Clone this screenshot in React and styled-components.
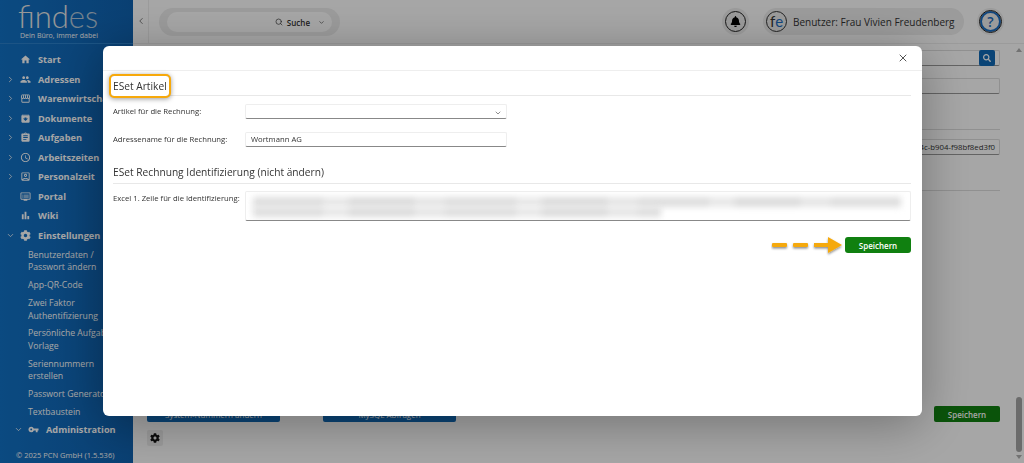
import React from "react";
import styled, { createGlobalStyle } from "styled-components";
import { FaBell, FaCog, FaSearch } from "react-icons/fa";
import {
  MdHome,
  MdPeople,
  MdOutlineStorefront,
  MdArchive,
  MdAssignment,
  MdAccessTime,
  MdOutlineAccountBox,
  MdOutlineDvr,
  MdBarChart,
  MdVpnKey,
} from "react-icons/md";
import { FiChevronRight, FiChevronDown, FiChevronLeft, FiX, FiSearch } from "react-icons/fi";

const GlobalStyle = createGlobalStyle`
  html, body { margin: 0; height: 100%; overflow: hidden; }
  body { font-family: "Open Sans", "Liberation Sans", sans-serif; background: #fff; color: #333; }
  * { box-sizing: border-box; }
`;

const menu = [
  { label: "Start", icon: MdHome },
  { label: "Adressen", icon: MdPeople, arrow: true },
  { label: "Warenwirtschaft", icon: MdOutlineStorefront, arrow: true },
  { label: "Dokumente", icon: MdArchive, arrow: true },
  { label: "Aufgaben", icon: MdAssignment, arrow: true },
  { label: "Arbeitszeiten", icon: MdAccessTime, arrow: true },
  { label: "Personalzeit", icon: MdOutlineAccountBox, arrow: true },
  { label: "Portal", icon: MdOutlineDvr },
  { label: "Wiki", icon: MdBarChart },
  { label: "Einstellungen", icon: FaCog, open: true },
];

const subMenu = [
  "Benutzerdaten /\nPasswort ändern",
  "App-QR-Code",
  "Zwei Faktor\nAuthentifizierung",
  "Persönliche Aufgaben\nVorlage",
  "Seriennummern\nerstellen",
  "Passwort Generator",
  "Textbaustein",
];

const blurLines = [648, 408];

const App = () => {
  return (
    <>
      <GlobalStyle />
      <Page>
        <Sidebar>
          <Logo>
            <LogoWord>
              find<em>es</em>
            </LogoWord>
            <LogoSlogan>Dein Büro, immer dabei</LogoSlogan>
          </Logo>
          <Menu>
            {menu.map((item) => (
              <MenuItem key={item.label}>
                <Caret>
                  {item.arrow && <FiChevronRight />}
                  {item.open && <FiChevronDown />}
                </Caret>
                <MenuIcon>
                  <item.icon />
                </MenuIcon>
                <span>{item.label}</span>
              </MenuItem>
            ))}
            <SubMenu>
              {subMenu.map((label) => (
                <SubItem key={label}>{label}</SubItem>
              ))}
            </SubMenu>
            <AdminItem>
              <Caret>
                <FiChevronDown />
              </Caret>
              <MenuIcon>
                <MdVpnKey />
              </MenuIcon>
              <span>Administration</span>
            </AdminItem>
          </Menu>
          <Copyright>© 2025 PCN GmbH (1.5.536)</Copyright>
        </Sidebar>

        <Main>
          <Header>
            <CollapseTab>
              <FiChevronLeft />
            </CollapseTab>
            <SearchPill>
              <SearchInner>
                <FiSearch />
                <span>Suche</span>
                <FiChevronDown />
              </SearchInner>
            </SearchPill>
            <HeaderRight>
              <RoundHalo>
                <BellCircle>
                  <FaBell />
                </BellCircle>
              </RoundHalo>
              <UserPill>
                <UserLogo>
                  f<b>e</b>
                </UserLogo>
                <span>Benutzer: Frau Vivien Freudenberg</span>
              </UserPill>
              <RoundHalo>
                <HelpCircle>?</HelpCircle>
              </RoundHalo>
            </HeaderRight>
          </Header>

          <ContentWrap>
            <Content>
              <Field $top={6}>
                <SearchButton>
                  <FaSearch />
                </SearchButton>
              </Field>
              <Field $top={12} />
              <Rule $top={35} />
              <Field $top={9}>
                <FieldText>4c-b904-f98bf8ed3f0</FieldText>
              </Field>
              <Rule $top={35} />
              <BottomRow>
                <BlueButton>System-Nummern ändern</BlueButton>
                <BlueButton>MySQL Abfragen</BlueButton>
                <SaveBehind>Speichern</SaveBehind>
              </BottomRow>
              <GearButton>
                <FaCog />
              </GearButton>
            </Content>
            <ScrollBar>
              <ScrollArrow />
              <ScrollThumb />
              <ScrollArrow $down />
            </ScrollBar>
          </ContentWrap>
        </Main>
      </Page>

      <Overlay>
        <Modal>
          <ModalHeader>
            <FiX />
          </ModalHeader>
          <ModalBody>
            <SectionTitle>
              <Highlighted>ESet Artikel</Highlighted>
            </SectionTitle>
            <FormRow>
              <FormLabel>Artikel für die Rechnung:</FormLabel>
              <FormInput>
                <SelectCaret>
                  <FiChevronDown />
                </SelectCaret>
              </FormInput>
            </FormRow>
            <FormRow $top={13}>
              <FormLabel>Adressename für die Rechnung:</FormLabel>
              <FormInput>Wortmann AG</FormInput>
            </FormRow>
            <SecondTitle>ESet Rechnung Identifizierung (nicht ändern)</SecondTitle>
            <FormRow>
              <FormLabel>Excel 1. Zeile für die Identifizierung:</FormLabel>
              <TextBox>
                {blurLines.map((width) => (
                  <BlurLine key={width} style={{ width }} />
                ))}
              </TextBox>
            </FormRow>
            <ActionRow>
              <svg width="74" height="24" viewBox="0 0 74 24">
                <defs>
                  <filter id="arrowShadow" x="-10%" y="-30%" width="120%" height="180%">
                    <feDropShadow dx="0" dy="1.5" stdDeviation="1.2" floodColor="#000" floodOpacity="0.45" />
                  </filter>
                </defs>
                <g fill="#f5a90f" filter="url(#arrowShadow)">
                  <rect x="1" y="10" width="15" height="4" rx="1" />
                  <rect x="22" y="10" width="15" height="4" rx="1" />
                  <path d="M43 10h14V4l14 8-14 8v-6H43z" />
                </g>
              </svg>
              <SaveButton>Speichern</SaveButton>
            </ActionRow>
          </ModalBody>
        </Modal>
      </Overlay>
    </>
  );
};

export default App;

const Page = styled.div`
  display: flex;
  width: 1024px;
  height: 463px;
  overflow: hidden;
`;

const Sidebar = styled.aside`
  width: 133px;
  flex: none;
  display: flex;
  flex-direction: column;
  background: linear-gradient(90deg, #1272c6, #0f62b0);
  color: #fff;
`;

const Logo = styled.div`
  height: 44px;
  padding: 1px 0 0 18px;
  border-bottom: 1px solid #2c82cc;
`;

const LogoWord = styled.div`
  height: 30px;
  font-family: Lato, sans-serif;
  font-weight: 300;
  font-size: 31px;
  line-height: 31px;
  color: #e8e8e8;
  em {
    font-style: normal;
    color: #b4c8da;
  }
`;

const LogoSlogan = styled.div`
  margin-left: 2px;
  font-size: 7px;
  line-height: 9px;
  white-space: nowrap;
`;

const Menu = styled.nav`
  padding-top: 6px;
  flex: 1;
`;

const MenuItem = styled.div`
  display: flex;
  align-items: center;
  height: 19.5px;
  font-size: 9.2px;
  font-weight: 700;
  white-space: nowrap;
  overflow: hidden;
`;

const AdminItem = styled(MenuItem)`
  padding-left: 8px;
  margin-top: -0.5px;
`;

const Caret = styled.span`
  width: 20px;
  flex: none;
  display: flex;
  justify-content: center;
  font-size: 9px;
`;

const MenuIcon = styled.span`
  width: 18px;
  flex: none;
  display: flex;
  font-size: 11px;
`;

const SubMenu = styled.div`
  padding-top: 1px;
`;

const SubItem = styled.div`
  padding: 3.2px 0 2.4px 28px;
  font-size: 8.7px;
  line-height: 12.3px;
  white-space: pre;
`;

const Copyright = styled.div`
  padding: 0 0 3px 16px;
  font-size: 7.5px;
  line-height: 9px;
  white-space: nowrap;
`;

const Main = styled.main`
  flex: 1;
  min-width: 0;
  display: flex;
  flex-direction: column;
  background: #fff;
`;

const Header = styled.header`
  height: 44px;
  flex: none;
  display: flex;
  align-items: flex-start;
  border-bottom: 1px solid #eee;
`;

const CollapseTab = styled.div`
  width: 16px;
  height: 43px;
  display: flex;
  align-items: center;
  justify-content: center;
  border-right: 1px solid #eee;
  font-size: 10px;
  color: #666;
  padding-bottom: 2px;
`;

const SearchPill = styled.div`
  width: 181px;
  height: 28px;
  margin: 8px 0 0 10px;
  padding: 4px 8px;
  border-radius: 14px;
  background: #eee;
`;

const SearchInner = styled.div`
  height: 20px;
  border-radius: 10px;
  background: #fff;
  display: flex;
  align-items: center;
  justify-content: flex-end;
  gap: 4px;
  padding-right: 7px;
  font-size: 8px;
  font-weight: 600;
  color: #333;
  svg:last-child {
    margin-left: 4px;
    font-size: 7px;
  }
`;

const HeaderRight = styled.div`
  margin-left: auto;
  display: flex;
  align-items: center;
  padding: 8px 20px 0 0;
`;

const RoundHalo = styled.div`
  width: 27px;
  height: 27px;
  border-radius: 50%;
  background: #eee;
  display: flex;
  align-items: center;
  justify-content: center;
`;

const BellCircle = styled.div`
  width: 21px;
  height: 21px;
  border-radius: 50%;
  border: 1px solid #222;
  display: flex;
  align-items: center;
  justify-content: center;
  font-size: 11px;
  color: #000;
`;

const HelpCircle = styled.div`
  width: 21px;
  height: 21px;
  border-radius: 50%;
  border: 2px solid #1a6cc0;
  outline: 1px solid #222;
  display: flex;
  align-items: center;
  justify-content: center;
  font-size: 14px;
  font-weight: 600;
  color: #1a6cc0;
`;

const UserPill = styled.div`
  width: 201px;
  height: 27px;
  margin: 0 13px 0 14px;
  padding-left: 3px;
  border-radius: 14px;
  background: #eee;
  display: flex;
  align-items: center;
  gap: 6px;
  font-size: 10px;
  white-space: nowrap;
  color: #333;
`;

const UserLogo = styled.div`
  width: 21px;
  height: 21px;
  flex: none;
  border-radius: 50%;
  border: 1px solid #333;
  display: flex;
  align-items: center;
  justify-content: center;
  font-family: Lato, sans-serif;
  font-size: 15px;
  line-height: 1;
  b {
    font-weight: 400;
    color: #1a6cc0;
  }
`;

const ContentWrap = styled.div`
  flex: 1;
  min-height: 0;
  display: flex;
`;

const Content = styled.div`
  width: 867px;
  padding-left: 14px;
`;

const Field = styled.div`
  height: 16px;
  margin-top: ${(p) => p.$top}px;
  border: 1px solid #ddd;
  border-bottom-color: #999;
  border-radius: 2px;
  display: flex;
  align-items: center;
  justify-content: flex-end;
  background: #fff;
`;

const FieldText = styled.span`
  font-size: 7.8px;
  padding-right: 4px;
  color: #333;
  white-space: nowrap;
`;

const SearchButton = styled.div`
  width: 16px;
  height: 16px;
  margin-right: 4px;
  border-radius: 2px;
  background: #1069b6;
  color: #fff;
  display: flex;
  align-items: center;
  justify-content: center;
  font-size: 8px;
`;

const Rule = styled.div`
  height: 1px;
  margin-top: ${(p) => p.$top}px;
  background: #ddd;
`;

const BottomRow = styled.div`
  margin-top: 215px;
  height: 16px;
  display: flex;
  gap: 43px;
`;

const BlueButton = styled.div`
  width: 133px;
  height: 16px;
  border-radius: 2px;
  background: #1069b6;
  color: #fff;
  font-size: 8px;
  display: flex;
  align-items: center;
  justify-content: center;
`;

const SaveBehind = styled.div`
  margin-left: auto;
  width: 66px;
  height: 16px;
  border-radius: 2px;
  background: #108010;
  color: #fff;
  font-size: 8px;
  font-weight: 600;
  display: flex;
  align-items: center;
  justify-content: center;
`;

const GearButton = styled.div`
  width: 16px;
  height: 16px;
  margin-top: 8px;
  border-radius: 2px;
  background: #eee;
  color: #111;
  font-size: 10px;
  display: flex;
  align-items: center;
  justify-content: center;
`;

const ScrollBar = styled.div`
  width: 24px;
  margin-left: auto;
  padding: 4px 2px 4px 16px;
  display: flex;
  flex-direction: column;
  align-items: center;
`;

const ScrollArrow = styled.div`
  width: 0;
  height: 0;
  flex: none;
  border-left: 3px solid transparent;
  border-right: 3px solid transparent;
  ${(p) => (p.$down ? "border-top: 4px solid #b0b0b0;" : "border-bottom: 4px solid #b0b0b0;")}
`;

const ScrollThumb = styled.div`
  width: 6px;
  height: 55px;
  flex: none;
  margin-top: auto;
  margin-bottom: 3px;
  border-radius: 3px;
  background: #a5a5a5;
`;

const Overlay = styled.div`
  position: fixed;
  inset: 0;
  padding: 46px 0 0 103px;
  background: rgba(0, 0, 0, 0.35);
`;

const Modal = styled.div`
  width: 819px;
  height: 370px;
  border-radius: 6px;
  background: #fff;
  box-shadow: 0 8px 50px rgba(0, 0, 0, 0.32);
`;

const ModalHeader = styled.div`
  height: 25px;
  display: flex;
  align-items: center;
  justify-content: flex-end;
  padding: 0 13px 0 0;
  border-bottom: 1px solid #eee;
  font-size: 12px;
  color: #555;
`;

const ModalBody = styled.div`
  padding: 0 11px 0 10px;
`;

const SectionTitle = styled.div`
  height: 25px;
  border-bottom: 1px solid #e8e8e8;
  margin-bottom: 8px;
  display: flex;
  align-items: flex-start;
  font-size: 10.2px;
  color: #333;
`;

const Highlighted = styled.span`
  display: block;
  height: 20px;
  margin: 5px 0 0 -2px;
  padding: 0 2px;
  line-height: 20px;
  border-radius: 3px;
  outline: 2px solid #f7a90b;
  background: #fff;
  box-shadow: 0 1px 5px 2px rgba(0, 0, 0, 0.4);
  white-space: nowrap;
`;

const SecondTitle = styled.div`
  margin: 18px 0 7px;
  height: 19px;
  padding-bottom: 2px;
  border-bottom: 1px solid #e8e8e8;
  font-size: 10.2px;
  line-height: 15px;
  color: #333;
`;

const FormRow = styled.div`
  display: grid;
  grid-template-columns: 132px 1fr;
  margin-top: ${(p) => p.$top || 0}px;
`;

const FormLabel = styled.label`
  font-size: 7.7px;
  line-height: 15px;
  color: #333;
  white-space: nowrap;
`;

const FormInput = styled.div`
  width: 262px;
  height: 15px;
  padding-left: 5px;
  border: 1px solid #eee;
  border-bottom-color: #888;
  border-radius: 2px;
  font-size: 7.7px;
  line-height: 13px;
  color: #333;
  position: relative;
`;

const SelectCaret = styled.span`
  position: absolute;
  right: 4px;
  top: 2px;
  font-size: 8px;
  color: #555;
`;

const TextBox = styled.div`
  height: 30px;
  padding: 5px 10px 0 7px;
  border: 1px solid #eee;
  border-bottom-color: #888;
  border-radius: 2px;
  overflow: hidden;
`;

const BlurLine = styled.div`
  height: 10px;
  filter: blur(3px);
  background: repeating-linear-gradient(100deg, #dedede 0 70px, #e8e8e8 70px 95px, #dcdcdc 95px 160px, #e6e6e6 160px 190px);
`;

const ActionRow = styled.div`
  margin-top: 12px;
  display: flex;
  align-items: center;
  justify-content: flex-end;
`;

const SaveButton = styled.div`
  width: 66px;
  height: 16px;
  border-radius: 3px;
  background: #108010;
  color: #fff;
  font-size: 8px;
  font-weight: 600;
  display: flex;
  align-items: center;
  justify-content: center;
`;
